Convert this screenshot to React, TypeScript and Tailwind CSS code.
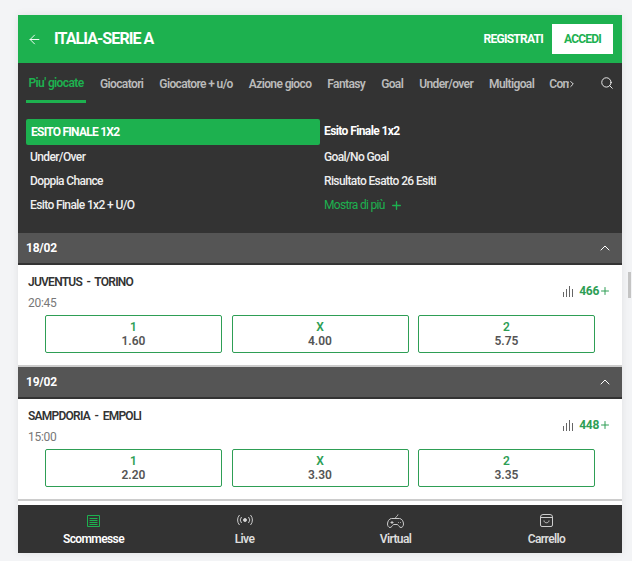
import { ArrowLeft, ChevronRight, ChevronUp, Plus, Search } from 'lucide-react'

const tabs = ['Giocatori', 'Giocatore + u/o', 'Azione gioco', 'Fantasy', 'Goal', 'Under/over', 'Multigoal']

const matches = [
  {
    date: '18/02',
    teams: 'JUVENTUS  -  TORINO',
    time: '20:45',
    count: '466',
    odds: [
      ['1', '1.60'],
      ['X', '4.00'],
      ['2', '5.75'],
    ],
  },
  {
    date: '19/02',
    teams: 'SAMPDORIA  -  EMPOLI',
    time: '15:00',
    count: '448',
    odds: [
      ['1', '2.20'],
      ['X', '3.30'],
      ['2', '3.35'],
    ],
  },
]

function BarsIcon() {
  return (
    <svg width="11" height="11" viewBox="0 0 11 11" stroke="#666" strokeWidth="1" fill="none">
      <path d="M0.500 11V6M3.500 11V3M6.500 11V0M9.500 11V3" />
    </svg>
  )
}

function NotesIcon() {
  return (
    <svg width="13" height="13" viewBox="0 0 13 13" fill="none" stroke="#1db14f" strokeWidth="1">
      <path d="M0.500 1.500h12v11h-12zM2.500 4.500h8M2.500 6.500h8M2.500 8.500h8M2.500 10.500h8" />
    </svg>
  )
}

function LiveIcon() {
  return (
    <svg width="16" height="12" viewBox="0 0 16 12" fill="none" stroke="#ccc" strokeWidth="1">
      <circle cx="8" cy="6" r="1.500" fill="#ddd" />
      <path d="M4.500 3a4.500 4.500 0 0 0 0 6M11.500 3a4.500 4.500 0 0 1 0 6M2.500 1a7.500 7.500 0 0 0 0 10M13.500 1a7.500 7.500 0 0 1 0 10" />
    </svg>
  )
}

function PadIcon() {
  return (
    <svg width="17" height="14" viewBox="0 0 17 14" fill="none" stroke="#ccc" strokeWidth="1">
      <path d="M4.500 4.500h8c2.200 0 4 2.800 4 5.500 0 1.800-1 3.500-2.500 3.500-1.500 0-2.500-2-3.500-3h-4c-1 1-2 3-3.500 3C1.500 13.500.500 11.800.500 10c0-2.700 1.800-5.500 4-5.500zM8.500 4.500c0-2 2-2 2.500-4M3.500 8.500h3M5 7v3M11 8.500h.7M13 8.500h.7" />
    </svg>
  )
}

function BasketIcon() {
  return (
    <svg width="13" height="13" viewBox="0 0 13 13" fill="none" stroke="#ccc" strokeWidth="1">
      <path d="M3 .500h7a2.500 2.500 0 0 1 2.500 2.500v8a1.500 1.500 0 0 1-1.500 1.500H2A1.500 1.500 0 0 1 .500 11V3A2.500 2.500 0 0 1 3 .500zM.500 3.500h12M4 6.500c0 3 5 3 5 0" />
    </svg>
  )
}

function MenuLink({ children }: { children: string }) {
  return <div className="h-6 flex items-center text-[12px] font-medium tracking-[-0.62px] text-[#eee]">{children}</div>
}

export default function App() {
  return (
    <div className="h-[561px] w-[632px] bg-[#f3f4f6] pt-[15px] pl-[18px] relative font-['Roboto',sans-serif] overflow-hidden">
      <div className="w-[604px] h-[538px] bg-white flex flex-col shadow-[0_0_8px_rgba(0,0,0,0.08)]">
        {/* Header */}
        <div className="h-12 bg-[#1db14f] flex items-center pl-[9px] pr-[9px] text-white shrink-0">
          <ArrowLeft className="w-[15px] h-[15px]" strokeWidth={1.5} />
          <span className="ml-[12px] text-[16px] font-bold tracking-[-0.92px]">ITALIA-SERIE A</span>
          <span className="ml-auto text-[12px] font-bold tracking-[-0.75px]">REGISTRATI</span>
          <span className="ml-[9px] w-[61px] h-[30px] bg-white text-[#1db14f] text-[12px] font-bold tracking-[-0.8px] flex items-center justify-center">
            ACCEDI
          </span>
        </div>

        {/* Tabs and markets */}
        <div className="h-[170px] bg-[#333] shrink-0 px-2">
          <div className="h-10 flex items-center text-[12px] font-semibold tracking-[-0.62px] text-[#bbb] relative">
            <div className="w-[60px] h-10 pt-[3px] border-b-[3px] border-[#1db14f] flex items-center justify-center text-[#1db14f] mr-[14px]">
              Piu' giocate
            </div>
            <div className="flex gap-4 pt-[2px]">
              {tabs.map((t) => (
                <span key={t}>{t}</span>
              ))}
            </div>
            <span className="ml-[15px] pt-[2px] w-[20px] overflow-hidden whitespace-nowrap">Combo</span>
            <ChevronRight className="w-[10px] h-[10px] mt-[2px] -ml-[2px] text-white" />
            <Search className="absolute right-0 top-[13px] w-[14px] h-[14px] text-white" strokeWidth={1.5} />
          </div>

          <div className="mt-4 grid grid-cols-[294px_1fr] gap-x-1">
            <div>
              <div className="h-[26px] bg-[#1db14f] rounded-[2px] flex items-center pl-[5px] text-[12px] font-bold tracking-[-0.75px] text-white">
                ESITO FINALE 1X2
              </div>
              <div className="pl-1">
                <MenuLink>Under/Over</MenuLink>
                <MenuLink>Doppia Chance</MenuLink>
                <MenuLink>Esito Finale 1x2 + U/O</MenuLink>
              </div>
            </div>
            <div>
              <div className="h-[26px] flex items-center pb-[3px] text-[12px] font-bold tracking-[-0.6px] text-white">Esito Finale 1x2</div>
              <MenuLink>Goal/No Goal</MenuLink>
              <MenuLink>Risultato Esatto 26 Esiti</MenuLink>
              <div className="h-6 flex items-center text-[12px] tracking-[-0.7px] text-[#1db14f]">
                Mostra di più
                <Plus className="w-[13px] h-[13px] ml-[5px]" strokeWidth={2.5} />
              </div>
            </div>
          </div>
        </div>

        {/* Matches */}
        <div className="flex-1 min-h-0 overflow-hidden">
          {matches.map((m) => (
            <div key={m.date}>
              <div className="h-8 bg-[#555] border-b-2 border-[#333] flex items-center justify-between pl-2 pr-[9px] text-white">
                <span className="text-[12px] font-bold tracking-[-0.2px]">{m.date}</span>
                <ChevronUp className="w-[16px] h-[16px]" strokeWidth={1.5} />
              </div>
              <div className="h-[102px] border-b-2 border-[#ccc] pl-[10px] pr-[11px] relative">
                <div className="pt-[8px] text-[12px] font-semibold tracking-[-0.75px] whitespace-pre text-[#333]">{m.teams}</div>
                <div className="mt-[3px] text-[12px] tracking-[-0.3px] text-[#777]">{m.time}</div>
                <div className="absolute right-[11px] top-[17px] flex items-center gap-[5px]">
                  <BarsIcon />
                  <span className="flex items-center text-[12px] font-bold tracking-[-0.3px] text-[#2e9e55]">
                    {m.count}
                    <Plus className="w-[12px] h-[12px]" strokeWidth={2} />
                  </span>
                </div>
                <div className="mt-[3px] ml-[17px] w-[550px] flex justify-between">
                  {m.odds.map(([label, price]) => (
                    <div
                      key={label}
                      className="w-[177px] h-[38px] border border-[#2e9e55] rounded-[2px] flex flex-col items-center justify-center text-[12px] leading-[14px] font-semibold"
                    >
                      <span className="text-[#2e9e55]">{label}</span>
                      <span className="text-[#555]">{price}</span>
                    </div>
                  ))}
                </div>
              </div>
            </div>
          ))}
        </div>

        {/* Bottom nav */}
        <div className="h-12 bg-[#333] grid grid-cols-4 shrink-0 pt-[3px] text-[12px] font-semibold tracking-[-0.6px]">
          <div className="flex flex-col items-center justify-center gap-[3px] text-white">
            <NotesIcon />
            Scommesse
          </div>
          <div className="flex flex-col items-center justify-center gap-[4px] text-[#ddd]">
            <LiveIcon />
            Live
          </div>
          <div className="flex flex-col items-center justify-center gap-[2px] text-[#ddd]">
            <PadIcon />
            Virtual
          </div>
          <div className="flex flex-col items-center justify-center gap-[3px] text-[#ddd]">
            <BasketIcon />
            Carrello
          </div>
        </div>
      </div>
      {/* Scrollbar thumb */}
      <div className="absolute left-[628px] top-[272px] w-[3px] h-[26px] bg-[#c4c4c4]" />
    </div>
  )
}
